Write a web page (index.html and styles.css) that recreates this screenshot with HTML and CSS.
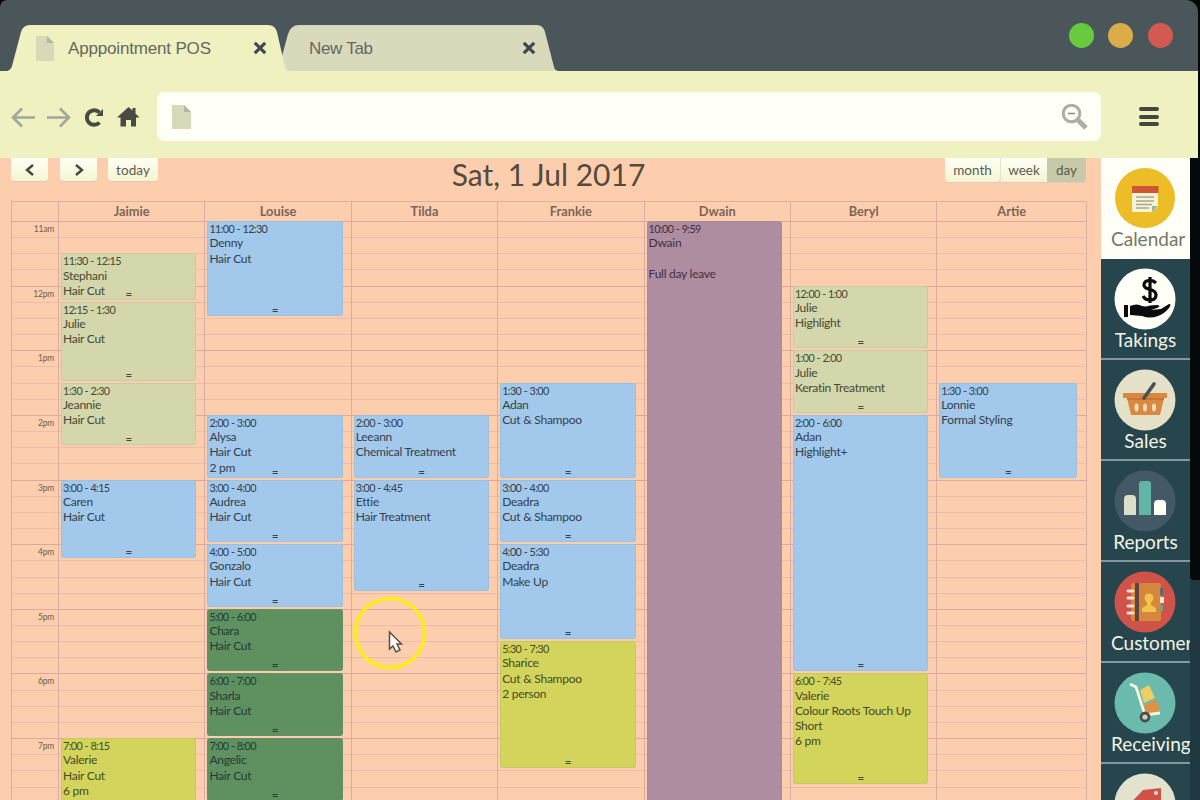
FILE: index.html
```html
<!DOCTYPE html>
<html lang="en">
<head>
<meta charset="utf-8">
<title>Appointment POS</title>
<link rel="stylesheet" href="styles.css">
</head>
<body>
<div class="window">
  <header class="titlebar">
    <svg class="tabs" width="570" height="46" viewBox="0 0 570 46">
      <path class="tab-back" d="M278 46 288 9Q291 0 299 0H537Q543 0 545 7L554 42Q555 46 559 46Z"/>
      <path class="tab-front" d="M7 46Q11 45 12 41L21 7Q23 0 30 0H268Q275 0 277 7L285 42Q286 46 289 46Z"/>
      <path class="doc" d="M36 11H47L54 18V36H36Z"/><path class="fold" d="M47 11 54 18H47Z"/>
      <text x="68" y="28.500" textLength="143">Apppointment POS</text>
      <text x="309" y="28.500" textLength="64">New Tab</text>
      <path class="cross" d="M254.800 17.800 265.200 28.200M265.200 17.800 254.800 28.200M523.800 17.800 534.200 28.200M534.200 17.800 523.800 28.200"/>
    </svg>
    <div class="lights"><i class="green"></i><i class="amber"></i><i class="red"></i></div>
  </header>
  <nav class="toolbar">
    <svg class="nav-icons" width="130" height="24" viewBox="0 0 130 24">
      <path class="arrow" d="M24 12.500H2M11 3.500 2 12.500 11 21.500M36 12.500H58M49 3.500 58 12.500 49 21.500"/>
      <path class="reload" d="M88.500 17.500A7.300 7.300 0 1 1 88.500 7.500"/><path class="solid" d="M92 4V11H85Z"/>
      <path class="solid" d="M117.500 12.500 129 2 133 5.500V3H136V8.500L140 12.500H136.500V21.500H131.500V15H126.500V21.500H121V12.500Z" transform="translate(-11.500 0)"/>
    </svg>
    <div class="address">
      <svg width="20" height="26" viewBox="0 0 20 26"><path class="doc" d="M0 1H12L19 8V25H0Z"/><path class="fold" d="M12 1 19 8H12Z"/></svg>
      <svg width="28" height="28" viewBox="0 0 28 28"><circle class="lens" cx="10.500" cy="10.500" r="8.300"/><path class="minus" d="M7 10.500H14"/><path class="handle" d="M17 17 25 25"/></svg>
    </div>
    <div class="menu"><i></i><i></i><i></i></div>
  </nav>
  <div class="content">
    <main class="calendar">
      <div class="controls">
        <div class="left">
          <span class="btn arrow-btn"><svg width="10" height="12" viewBox="0 0 10 12"><path d="M8 1 2 6 8 11"/></svg></span>
          <span class="btn arrow-btn"><svg width="10" height="12" viewBox="0 0 10 12"><path d="M2 1 8 6 2 11"/></svg></span>
          <span class="btn today">today</span>
        </div>
        <h1>Sat, 1 Jul 2017</h1>
        <div class="views"><span class="btn month">month</span><span class="btn week">week</span><span class="btn day">day</span></div>
      </div>
      <div class="heads"><b></b><b>Jaimie</b><b>Louise</b><b>Tilda</b><b>Frankie</b><b>Dwain</b><b>Beryl</b><b>Artie</b></div>
      <div class="grid">
        <div class="col axis"><span>11am</span><span>12pm</span><span>1pm</span><span>2pm</span><span>3pm</span><span>4pm</span><span>5pm</span><span>6pm</span><span>7pm</span></div>
        <div class="col">
          <div class="event sage" style="grid-row:3/6"><time>11:30 - 12:15</time><p>Stephani</p><p>Hair Cut</p></div>
          <div class="event sage" style="grid-row:6/11"><time>12:15 - 1:30</time><p>Julie</p><p>Hair Cut</p></div>
          <div class="event sage" style="grid-row:11/15"><time>1:30 - 2:30</time><p>Jeannie</p><p>Hair Cut</p></div>
          <div class="event blue" style="grid-row:17/22"><time>3:00 - 4:15</time><p>Caren</p><p>Hair Cut</p></div>
          <div class="event lime" style="grid-row:33/38"><time>7:00 - 8:15</time><p>Valerie</p><p>Hair Cut</p><p>6 pm</p></div>
        </div>
        <div class="col">
          <div class="event blue" style="grid-row:1/7"><time>11:00 - 12:30</time><p>Denny</p><p>Hair Cut</p></div>
          <div class="event blue" style="grid-row:13/17"><time>2:00 - 3:00</time><p>Alysa</p><p>Hair Cut</p><p>2 pm</p></div>
          <div class="event blue" style="grid-row:17/21"><time>3:00 - 4:00</time><p>Audrea</p><p>Hair Cut</p></div>
          <div class="event blue" style="grid-row:21/25"><time>4:00 - 5:00</time><p>Gonzalo</p><p>Hair Cut</p></div>
          <div class="event forest" style="grid-row:25/29"><time>5:00 - 6:00</time><p>Chara</p><p>Hair Cut</p></div>
          <div class="event forest" style="grid-row:29/33"><time>6:00 - 7:00</time><p>Sharla</p><p>Hair Cut</p></div>
          <div class="event forest" style="grid-row:33/37"><time>7:00 - 8:00</time><p>Angelic</p><p>Hair Cut</p></div>
        </div>
        <div class="col">
          <div class="event blue" style="grid-row:13/17"><time>2:00 - 3:00</time><p>Leeann</p><p>Chemical Treatment</p></div>
          <div class="event blue" style="grid-row:17/24"><time>3:00 - 4:45</time><p>Ettie</p><p>Hair Treatment</p></div>
        </div>
        <div class="col">
          <div class="event blue" style="grid-row:11/17"><time>1:30 - 3:00</time><p>Adan</p><p>Cut &amp; Shampoo</p></div>
          <div class="event blue" style="grid-row:17/21"><time>3:00 - 4:00</time><p>Deadra</p><p>Cut &amp; Shampoo</p></div>
          <div class="event blue" style="grid-row:21/27"><time>4:00 - 5:30</time><p>Deadra</p><p>Make Up</p></div>
          <div class="event lime" style="grid-row:27/35"><time>5:30 - 7:30</time><p>Sharice</p><p>Cut &amp; Shampoo</p><p>2 person</p></div>
        </div>
        <div class="col">
          <div class="event leave" style="grid-row:1/38"><time>10:00 - 9:59</time><p>Dwain</p><p>&nbsp;</p><p>Full day leave</p></div>
        </div>
        <div class="col">
          <div class="event sage" style="grid-row:5/9"><time>12:00 - 1:00</time><p>Julie</p><p>Highlight</p></div>
          <div class="event sage" style="grid-row:9/13"><time>1:00 - 2:00</time><p>Julie</p><p>Keratin Treatment</p></div>
          <div class="event blue" style="grid-row:13/29"><time>2:00 - 6:00</time><p>Adan</p><p>Highlight+</p></div>
          <div class="event lime" style="grid-row:29/36"><time>6:00 - 7:45</time><p>Valerie</p><p>Colour Roots Touch Up</p><p>Short</p><p>6 pm</p></div>
        </div>
        <div class="col">
          <div class="event blue" style="grid-row:11/17"><time>1:30 - 3:00</time><p>Lonnie</p><p>Formal Styling</p></div>
        </div>
      </div>
    </main>
    <aside class="sidebar">
      <div class="item active">
        <svg viewBox="0 0 62 62"><circle cx="31" cy="31" r="30" fill="#edbd27"/><path fill="#f8f3d3" d="M18 25H44V40L38 45H18Z"/><path fill="#cf5633" d="M18 19H44.500V26H18Z"/><path stroke="#a7a594" stroke-width="1.500" d="M22 30H40M22 34H40M22 37.500H38M22 41H35"/><path fill="#8db6a6" d="M38 45V39H44Z"/></svg>
        <span>Calendar</span>
      </div>
      <div class="item">
        <svg viewBox="0 0 62 62"><circle cx="31" cy="31" r="30.500" fill="#fffff8"/><path fill="none" stroke="#090b0c" stroke-width="3.200" d="M42 15Q39 12 35 12.500 30 13 30 17 30 20 36 21.500 42 23 42 27 42 32 36 32 31 32 29 28M36 9V35"/><path fill="#090b0c" d="M10 37H14V49H10ZM16 38Q23 35 28 38 32 39 36 37.500L43 37Q48 38 43 40L37 42 47 41 55 36Q58 36 55 40 50 46 44 48 36 51 28 48L16 47Z"/></svg>
        <span>Takings</span>
      </div>
      <div class="item">
        <svg viewBox="0 0 62 62"><circle cx="31" cy="31" r="30.500" fill="#e4e1c8"/><path fill="#d9893f" d="M9 24H53V29H50L46 46H17L13 29H9Z"/><path fill="#c87536" d="M13 29H50V31H13Z"/><g fill="#f4dfbd"><ellipse cx="22.500" cy="38.500" rx="2" ry="4"/><ellipse cx="31" cy="38.500" rx="2" ry="4"/><ellipse cx="40" cy="38.500" rx="2" ry="4"/></g><path stroke="#465057" stroke-width="3.600" stroke-linecap="round" d="M30 29 40 15"/></svg>
        <span>Sales</span>
      </div>
      <div class="item">
        <svg viewBox="0 0 62 62"><circle cx="31" cy="31" r="30.500" fill="#435a66"/><path fill="#dedfc8" d="M10 45V29Q10 25 14 25H18Q22 25 22 29V45Z"/><path fill="#61b4a6" d="M25 45V14Q25 11 28 11H34Q37 11 37 14V45Z"/><path fill="#fffff6" d="M40 45V34Q40 30 44 30H48Q52 30 52 34V45Z"/></svg>
        <span>Reports</span>
      </div>
      <div class="item">
        <svg viewBox="0 0 62 62"><circle cx="31" cy="31" r="30.500" fill="#d05349"/><rect x="17" y="12" width="30" height="38" rx="2" fill="#d6863d"/><path fill="#5d4541" d="M21 12H25V50H21Z"/><path stroke="#f3e2cf" stroke-width="3" stroke-linecap="round" d="M14 20H19M14 27H19M14 35H19M14 42H19"/><path fill="#536c83" d="M46 17H49V24H46Z"/><path fill="#f3e6d0" d="M46 26H50V32H46Z"/><path fill="#73a482" d="M46 34H49V40H46Z"/><circle cx="35" cy="27" r="4.500" fill="#f0c34c"/><path fill="#f0c34c" d="M33 30H37V34L42 37V41H28V37L33 34Z"/></svg>
        <span>Customer</span>
      </div>
      <div class="item">
        <svg viewBox="0 0 62 62"><circle cx="31" cy="31" r="30.500" fill="#6abbae"/><path fill="#edce64" d="M26 18 35 13 41 26 30 31Z"/><path fill="#dd9143" d="M30 33 43 28 46 39 33 43Z"/><path fill="none" stroke="#f7f4df" stroke-width="2.800" d="M16 12 22 15 31 43 46 41"/><circle cx="31" cy="45" r="4" fill="#d2cfb1" stroke="#464d55" stroke-width="2.800"/></svg>
        <span>Receiving</span>
      </div>
      <div class="item">
        <svg viewBox="0 0 62 62"><circle cx="31" cy="31" r="30.500" fill="#e3e2ce"/><path fill="#cf5248" d="M29 17 47 15V35L30 50 13 34Z"/><circle cx="42" cy="20" r="2" fill="#e3e2ce"/></svg>
      </div>
    </aside>
    <div class="scroll"><i></i></div>
  </div>
</div>
<svg class="pointer" width="76" height="76" viewBox="0 0 76 76"><circle cx="38" cy="38" r="34.500"/><path d="M37.500 37V54L41 51 44 57 48 55 45 49H49.500Z"/></svg>
</body>
</html>
```
FILE: styles.css
```css
* { box-sizing: border-box; }
body { margin: 0; width: 1200px; height: 800px; overflow: hidden; position: relative; background: #040607; font-family: Lato, "Open Sans", sans-serif; }
svg { display: block; }
.window { width: 1200px; height: 800px; }
.titlebar { width: 1198px; height: 71px; display: flex; justify-content: space-between; align-items: flex-start; padding: 25px 25.500px 0 0; background: #4a565a; border-radius: 7px 12px 0 0; }
.tab-back { fill: #d9dabc; }
.tab-front { fill: #eff1c0; }
.doc { fill: #d7d9b8; }
.fold { fill: #b4b6a0; }
.tabs text { font: 17px "Liberation Sans", Arial, sans-serif; fill: #65685f; }
.cross { stroke: #3e4a50; stroke-width: 3.200; }
.lights { display: flex; gap: 14.500px; }
.lights i { width: 25px; height: 25px; border-radius: 50%; margin-top: -2px; }
.green { background: #67cb3d; }
.amber { background: #dcac48; }
.red { background: #d35a50; }
.toolbar { width: 1198px; height: 87px; display: flex; align-items: center; padding: 4px 39px 0 11px; background: #eff1c0; }
.nav-icons { overflow: visible; }
.arrow { fill: none; stroke: #a4a69c; stroke-width: 2.600; }
.reload { fill: none; stroke: #494a43; stroke-width: 4; }
.solid { fill: #494a43; }
.address { width: 944px; height: 49px; margin-left: 16px; padding: 0 12px 0 15px; display: flex; align-items: center; justify-content: space-between; background: #fffff8; border-radius: 7px; }
.lens { fill: none; stroke: #acada4; stroke-width: 3; }
.minus { stroke: #898b83; stroke-width: 1.500; }
.handle { stroke: #acada4; stroke-width: 5; }
.menu { display: grid; gap: 3.500px; margin-left: auto; }
.menu i { width: 20px; height: 4px; border-radius: 2px; background: #45463f; }
.content { height: 642px; display: flex; overflow: hidden; }
.calendar { width: 1101px; padding: 0 15px 0 11px; background: #fdceae; overflow: hidden; }
.controls { height: 43px; display: grid; grid-template-columns: 300px 1fr 300px; align-items: start; }
.left { display: flex; }
.btn { height: 24px; display: flex; align-items: center; justify-content: center; font-size: 13.500px; color: #5c5a53; background: linear-gradient(#fffff6, #f5f5d2); border-radius: 0 0 4px 4px; border-bottom: 1px solid #dfcbb0; }
.arrow-btn { width: 37px; margin-right: 12px; }
.arrow-btn path { fill: none; stroke: #45463f; stroke-width: 2.400; }
.today { width: 50px; margin-left: -1px; letter-spacing: .1px; }
h1 { margin: -2px 0 0; font-size: 30px; line-height: 36px; font-weight: 400; text-align: center; color: #544a3d; }
.views { display: flex; justify-content: flex-end; }
.views .btn { height: 25px; }
.month { width: 55px; }
.week { width: 47px; border-left: 1px solid #e3e2cd; border-radius: 0; }
.views .day { width: 39px; background: #c7c9a8; border-radius: 0 0 4px 0; }
.heads, .grid { display: grid; grid-template-columns: 47px repeat(6, 146.400px) 149.600px; border-left: 1px solid #d9aca4; }
.heads { height: 20px; border-top: 1px solid #deafa5; }
.heads b { font-size: 12.800px; line-height: 19px; font-weight: 700; color: #7b6656; text-align: center; border-right: 1px solid #d9aca4; }
.grid { height: 600px; border-top: 1px solid #dea69f; }
.col { display: grid; grid-template-rows: repeat(37, 16.160px); align-content: start; height: 600px; margin-top: -1px; overflow: hidden; padding: 0 8px 0 2px; border-right: 1px solid #d9aca4; background: repeating-linear-gradient(#dda6a0 0 1px, #0000 1px 64.640px), repeating-linear-gradient(#efbca9 0 1px, #0000 1px 16.160px); }
.axis { grid-template-rows: repeat(9, 64.640px); padding: 0 4px; text-align: right; }
.axis span { font-size: 8.500px; line-height: 17px; letter-spacing: -.2px; color: #715b4e; }
.col:last-child { padding-right: 9px; }
.event { position: relative; margin-bottom: 2px; padding: 1px 2px; overflow: hidden; border-radius: 3px; box-shadow: inset 0 0 0 1px #7c928322; color: #34404a; font-size: 12px; line-height: 15.200px; letter-spacing: -.25px; white-space: nowrap; }
.event::after { content: "="; position: absolute; left: 0; right: 0; bottom: 1px; text-align: center; font: 700 8px/8px "DejaVu Sans", sans-serif; }
.event time { display: block; font-size: 10.800px; line-height: 14px; letter-spacing: -.6px; word-spacing: .3px; }
.event p { margin: 0; position: relative; top: -.700px; }
.blue { background: #a2c8eb; }
.sage { background: #d4d6ab; color: #454936; }
.forest { background: #5f9060; color: #213c36; }
.lime { background: #d3d45b; color: #464a28; }
.leave { background: #af8da0; color: #403041; }
.sidebar { width: 89px; background: #26454d; }
.item { height: 101px; padding: 9px 10px 0 13px; border-bottom: 2px solid #8398a0; overflow: hidden; color: #f3f4e6; }
.item svg { width: 62px; height: 62px; }
.item span { display: block; margin: -1.500px 0 0 -3px; font-size: 19px; line-height: 21px; text-align: center; white-space: nowrap; }
.item.active { background: #fffff8; color: #76766b; border-bottom: 0; }
.scroll { width: 10px; background: #1e3740; }
.scroll i { display: block; height: 422px; background: #06090b; border-radius: 0 0 0 4px; }
.pointer { position: absolute; left: 352px; top: 595px; }
.pointer circle { fill: none; stroke: #faee18; stroke-width: 3.500; }
.pointer path { fill: #fffcf5; stroke: #5d4d48; stroke-width: 1.500; }
```
